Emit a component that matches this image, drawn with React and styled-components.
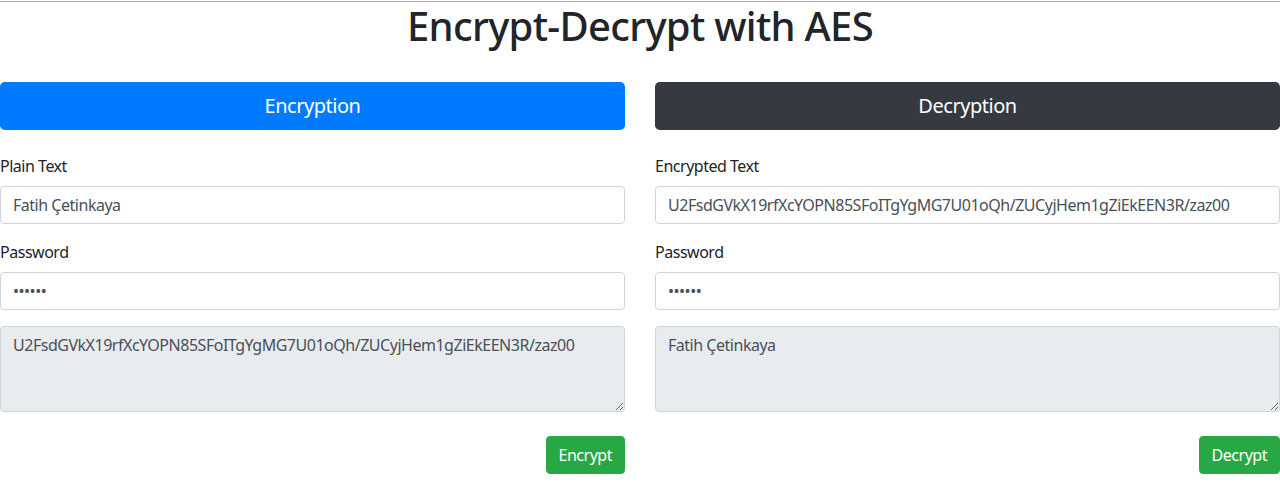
import React, { useState } from "react";
import styled, { createGlobalStyle } from "styled-components";

const FONT = `"Noto Sans", "Open Sans", Arial, sans-serif`;

const GlobalStyle = createGlobalStyle`
  * { box-sizing: border-box; }
  html, body {
    margin: 0;
    padding: 0;
    background: #fff;
    font-family: ${FONT};
    font-size: 16px;
    line-height: 1.5;
    letter-spacing: -0.03em;
    color: #212529;
  }
`;

const Page = styled.div`
  border-top: 1px solid #ababab;
  margin-top: 1px;
`;

const Title = styled.h1`
  margin: 0 0 32px;
  text-align: center;
  font-size: 40px;
  font-weight: 500;
  line-height: 1.2;
  letter-spacing: -0.7px;
`;

const Columns = styled.div`
  display: grid;
  grid-template-columns: 1fr 1fr;
  column-gap: 30px;
`;

const Panel = styled.form`
  display: flex;
  flex-direction: column;
`;

const Header = styled.div`
  height: 48px;
  border-radius: 4.8px;
  background: ${(p) => (p.$variant === "dark" ? "#343a40" : "#007bff")};
  color: #fff;
  font-size: 20px;
  display: flex;
  align-items: center;
  justify-content: center;
  margin-bottom: 24px;
`;

const Group = styled.div`
  display: flex;
  flex-direction: column;
  margin-bottom: 16px;
`;

const Label = styled.label`
  margin-bottom: 8px;
  font-size: 16px;
  line-height: 24px;
`;

const Input = styled.input`
  height: 38px;
  padding: 6px 12px;
  font: inherit;
  font-size: 16px;
  letter-spacing: inherit;
  color: #495057;
  background: #fff;
  border: 1px solid #ced4da;
  border-radius: 4px;
  outline: none;
`;

const Output = styled.textarea`
  height: 86px;
  padding: 6px 12px;
  font: inherit;
  font-size: 16px;
  line-height: 24px;
  letter-spacing: inherit;
  color: #495057;
  background: #e9ecef;
  border: 1px solid #ced4da;
  border-radius: 4px;
  resize: vertical;
  outline: none;
`;

const Actions = styled.div`
  display: flex;
  justify-content: flex-end;
  margin-top: 8px;
`;

const SubmitButton = styled.button`
  height: 38px;
  padding: 6px 12px;
  font-family: ${FONT};
  font-size: 16px;
  line-height: 24px;
  letter-spacing: inherit;
  color: #fff;
  background: #28a745;
  border: 1px solid #28a745;
  border-radius: 4px;
  cursor: pointer;
`;

const CIPHER = "U2FsdGVkX19rfXcYOPN85SFoITgYgMG7U01oQh/ZUCyjHem1gZiEkEEN3R/zaz00";

export default function App() {
  const [plain, setPlain] = useState("Fatih Çetinkaya");
  const [encPass, setEncPass] = useState("123456");
  const [cipher, setCipher] = useState(CIPHER);
  const [decPass, setDecPass] = useState("123456");

  return (
    <Page>
      <GlobalStyle />
      <Title>Encrypt-Decrypt with AES</Title>
      <Columns>
        <Panel onSubmit={(e) => e.preventDefault()}>
          <Header>Encryption</Header>
          <Group>
            <Label htmlFor="plain">Plain Text</Label>
            <Input id="plain" value={plain} onChange={(e) => setPlain(e.target.value)} />
          </Group>
          <Group>
            <Label htmlFor="encPass">Password</Label>
            <Input id="encPass" type="password" value={encPass} onChange={(e) => setEncPass(e.target.value)} />
          </Group>
          <Group>
            <Output readOnly value={CIPHER} />
          </Group>
          <Actions>
            <SubmitButton type="submit">Encrypt</SubmitButton>
          </Actions>
        </Panel>
        <Panel onSubmit={(e) => e.preventDefault()}>
          <Header $variant="dark">Decryption</Header>
          <Group>
            <Label htmlFor="cipher">Encrypted Text</Label>
            <Input id="cipher" value={cipher} onChange={(e) => setCipher(e.target.value)} />
          </Group>
          <Group>
            <Label htmlFor="decPass">Password</Label>
            <Input id="decPass" type="password" value={decPass} onChange={(e) => setDecPass(e.target.value)} />
          </Group>
          <Group>
            <Output readOnly value="Fatih Çetinkaya" />
          </Group>
          <Actions>
            <SubmitButton type="submit">Decrypt</SubmitButton>
          </Actions>
        </Panel>
      </Columns>
    </Page>
  );
}
